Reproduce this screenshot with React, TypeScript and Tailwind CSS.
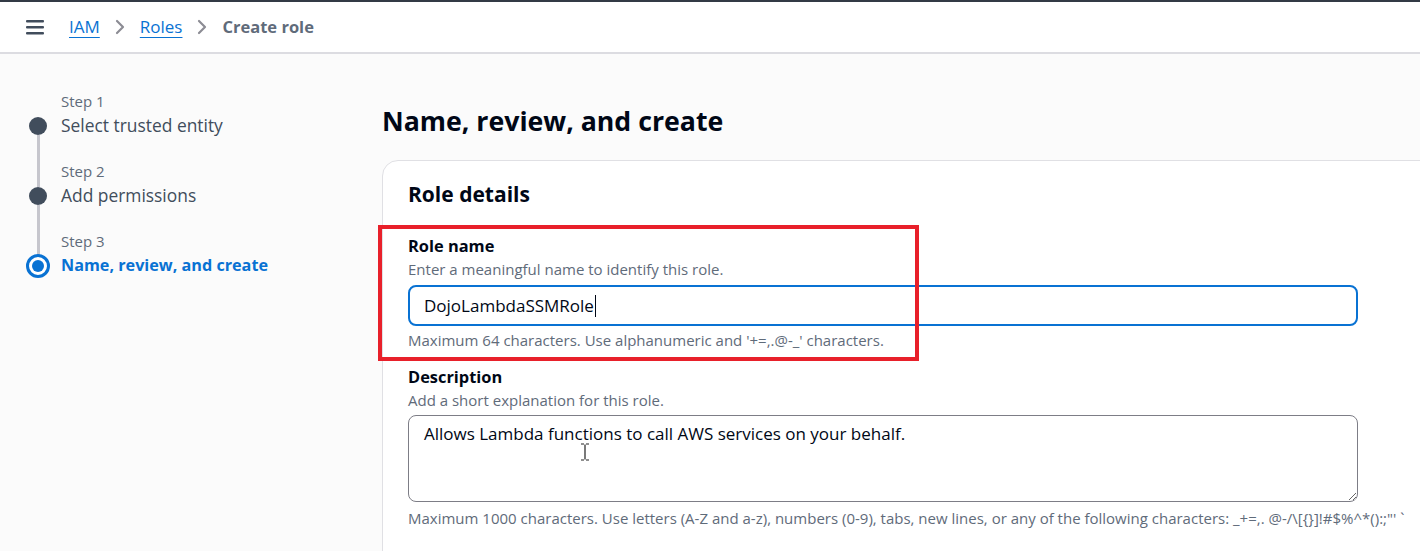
import React from "react";

const steps = [
  { label: "Step 1", title: "Select trusted entity", state: "done" },
  { label: "Step 2", title: "Add permissions", state: "done" },
  { label: "Step 3", title: "Name, review, and create", state: "current" },
];

function Chevron() {
  return (
    <svg width="12" height="16" viewBox="0 0 12 16" className="mx-[14px]">
      <path d="M3 2 L9 8 L3 14" fill="none" stroke="#8c8c94" strokeWidth="2.2" strokeLinecap="round" strokeLinejoin="round" />
    </svg>
  );
}

export default function App() {
  return (
    <div className="relative h-[551px] w-[1420px] overflow-hidden bg-[#fbfbfb] font-['Open_Sans',sans-serif] text-[#414d5c]">
      <header className="flex h-[54px] items-center border-t-2 border-b-2 border-t-[#333a45] border-b-[#dcdce1] bg-white pl-[26px]">
        <svg width="18" height="16" viewBox="0 0 18 16" className="mr-[25px]">
          <rect x="0" y="1" width="18" height="2.4" rx="1" fill="#414d5c" />
          <rect x="0" y="7" width="18" height="2.4" rx="1" fill="#414d5c" />
          <rect x="0" y="13" width="18" height="2.4" rx="1" fill="#414d5c" />
        </svg>
        <nav className="flex items-center text-[17px]">
          <a className="text-[#0972d3] underline underline-offset-[4px]">IAM</a>
          <Chevron />
          <a className="text-[#0972d3] underline underline-offset-[4px]">Roles</a>
          <Chevron />
          <span className="text-[16.5px] font-bold text-[#5f6b7a]">Create role</span>
        </nav>
      </header>

      <div className="flex">
        <aside className="w-[382px] shrink-0 pl-[26px] pt-[35px]">
          {steps.map((s, i) => (
            <div key={s.label} className="flex h-[70px]">
              <div className="flex w-[24px] flex-col items-center">
                <div className={`h-[28px] w-[3px] ${i === 0 ? "bg-transparent" : "bg-[#c6c6cd]"}`} />
                {s.state === "current" ? (
                  <div className="-my-[3px] flex h-[24px] w-[24px] items-center justify-center rounded-full border-[3px] border-[#0972d3] bg-white">
                    <div className="h-[12px] w-[12px] rounded-full bg-[#0972d3]" />
                  </div>
                ) : (
                  <div className="h-[18px] w-[18px] rounded-full bg-[#414d5c]" />
                )}
                <div className={`w-[3px] flex-1 ${i === steps.length - 1 ? "bg-transparent" : "bg-[#c6c6cd]"}`} />
              </div>
              <div className="pl-[11px]">
                <div className="h-[24px] text-[15px] leading-[24px] text-[#5f6b7a]">{s.label}</div>
                <div
                  className={`h-[24px] leading-[24px] ${
                    s.state === "current" ? "text-[16.2px] font-bold text-[#0972d3]" : "text-[17.4px] text-[#414d5c]"
                  }`}
                >
                  {s.title}
                </div>
              </div>
            </div>
          ))}
        </aside>

        <main className="flex-1 pt-[49px]">
          <h1 className="mb-[21px] h-[36px] text-[26.7px] font-bold leading-[36px] text-[#000716]">
            Name, review, and create
          </h1>

          <section className="relative w-[1080px] rounded-[16px] border border-[#e0e0e4] bg-white pl-[25px] pt-[19px] pb-[40px]">
            <h2 className="text-[21px] font-bold leading-[28px] text-[#000716]">Role details</h2>

            <div className="mt-[26px] w-[950px]">
              <div className="text-[16.4px] font-bold leading-[24px] text-[#000716]">Role name</div>
              <div className="text-[15px] leading-[22px] text-[#5f6b7a]">
                Enter a meaningful name to identify this role.
              </div>
              <div className="mt-[5px] flex h-[41px] items-center rounded-[8px] border-2 border-[#0972d3] pl-[14px] text-[17px] text-[#000716]">
                DojoLambdaSSMRole
                <span className="ml-[1px] inline-block h-[22px] w-[1px] bg-[#000716]" />
              </div>
              <div className="mt-[3px] text-[15px] leading-[22px] text-[#5f6b7a]">
                Maximum 64 characters. Use alphanumeric and '+=,.@-_' characters.
              </div>

              <div className="mt-[14px] text-[16.4px] font-bold leading-[24px] text-[#000716]">Description</div>
              <div className="text-[15px] leading-[22px] text-[#5f6b7a]">
                Add a short explanation for this role.
              </div>
              <div className="relative mt-[4px]">
                <textarea
                  readOnly
                  defaultValue="Allows Lambda functions to call AWS services on your behalf."
                  className="block h-[87px] w-full resize-y rounded-[8px] border border-[#7d7d86] px-[15px] pt-[6px] text-[17px] leading-[24px] text-[#000716] outline-none"
                />
                <svg width="10" height="18" viewBox="0 0 10 18" className="absolute left-[172px] top-[28px]">
                  <path d="M1 1 H4 M6 1 H9 M5 1.5 V16.5 M1 17 H4 M6 17 H9" fill="none" stroke="#222" strokeWidth="1.2" />
                </svg>
              </div>
              <div className="mt-[5px] whitespace-nowrap text-[15px] leading-[22px] text-[#5f6b7a]">
                Maximum 1000 characters. Use letters (A-Z and a-z), numbers (0-9), tabs, new lines, or any of the following characters: _+=,. @-/\[{"{}"}]!#$%^*():;"' `
              </div>
            </div>

            <div className="pointer-events-none absolute left-[-5px] top-[64px] h-[136px] w-[541px] border-[4px] border-[#e8202a]" />
          </section>
        </main>
      </div>
    </div>
  );
}
